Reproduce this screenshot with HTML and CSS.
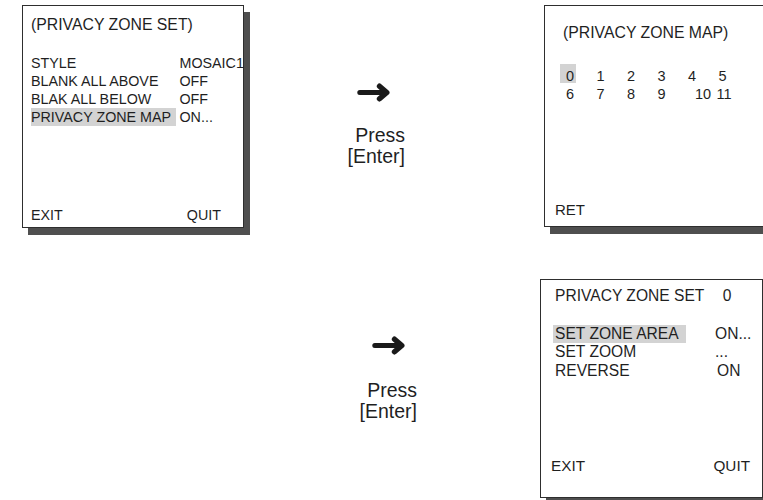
FILE: index.html
```html
<!DOCTYPE html>
<html lang="en">
<head>
<meta charset="utf-8">
<title>Privacy Zone Set</title>
<link rel="stylesheet" href="styles.css">
</head>
<body>
<div class="row row-top">
  <div class="box box-set">
    <div class="title t1">(PRIVACY ZONE SET)</div>
    <div class="menu menu1">
      <div class="lbl">STYLE</div><div class="val val-mosaic">MOSAIC1</div>
      <div class="lbl">BLANK ALL ABOVE</div><div class="val">OFF</div>
      <div class="lbl">BLAK ALL BELOW</div><div class="val">OFF</div>
      <div class="lbl hl">PRIVACY ZONE MAP</div><div class="val val-on">ON...</div>
    </div>
    <div class="foot foot1"><span>EXIT</span><span>QUIT</span></div>
  </div>
  <div class="step step1">
    <svg class="arrow" width="33" height="19" viewBox="0 0 33 19"><line x1="2.8" y1="9.5" x2="26" y2="9.5" stroke="#1a1a1a" stroke-width="5" stroke-linecap="round"/><polyline points="22.5,3.2 29.8,9.5 22.5,15.8" fill="none" stroke="#1a1a1a" stroke-width="5.4" stroke-linecap="round" stroke-linejoin="round"/></svg>
    <div class="press">Press<br>[Enter]</div>
  </div>
  <div class="box box-map">
    <div class="title t2">(PRIVACY ZONE MAP)</div>
    <div class="nums">
      <span class="sel">0</span><span>1</span><span>2</span><span>3</span><span>4</span><span>5</span>
      <span>6</span><span>7</span><span>8</span><span>9</span><span class="n10">10</span><span class="n11">11</span>
    </div>
    <div class="foot foot2"><span>RET</span></div>
  </div>
</div>
<div class="row row-bottom">
  <div class="step step2">
    <svg class="arrow" width="33" height="19" viewBox="0 0 33 19"><line x1="2.8" y1="9.5" x2="26" y2="9.5" stroke="#1a1a1a" stroke-width="5" stroke-linecap="round"/><polyline points="22.5,3.2 29.8,9.5 22.5,15.8" fill="none" stroke="#1a1a1a" stroke-width="5.4" stroke-linecap="round" stroke-linejoin="round"/></svg>
    <div class="press">Press<br>[Enter]</div>
  </div>
  <div class="box box-zone">
    <div class="title t3">PRIVACY ZONE SET<span class="zone-no">0</span></div>
    <div class="menu menu3">
      <div class="lbl hl">SET ZONE AREA</div><div class="val">ON...</div>
      <div class="lbl">SET ZOOM</div><div class="val">...</div>
      <div class="lbl">REVERSE</div><div class="val val-rev">ON</div>
    </div>
    <div class="foot foot3"><span>EXIT</span><span>QUIT</span></div>
  </div>
</div>
</body>
</html>
```

FILE: styles.css
```css
html, body {
  margin: 0;
  padding: 0;
  background: #ffffff;
}
body {
  width: 763px;
  height: 500px;
  overflow: hidden;
  font-family: "Liberation Sans", Arial, sans-serif;
  color: #1f1f1f;
}
.row {
  display: flex;
  align-items: flex-start;
}
.row-top {
  height: 279px;
}
.row-bottom {
  height: 221px;
}
.box {
  box-sizing: border-box;
  background: #ffffff;
  border: 1px solid #2e2e2e;
  box-shadow: 6px 7px 0 #4f4f4f;
  display: flex;
  flex-direction: column;
  flex: none;
  white-space: nowrap;
}
.box-set {
  margin: 5px 0 0 22px;
  width: 222px;
  height: 223px;
}
.box-map {
  margin: 5px 0 0 139px;
  width: 240px;
  height: 222px;
}
.box-zone {
  margin: 0 0 0 123px;
  width: 223px;
  height: 219px;
}
.title {
  font-size: 15.8px;
  line-height: 18px;
}
.t1 {
  padding: 10px 0 0 8px;
}
.t2 {
  padding: 18px 0 0 18px;
}
.t3 {
  font-size: 15.6px;
  line-height: 18.5px;
  padding: 6.5px 0 0 14px;
}
.zone-no {
  margin-left: 18.5px;
}
.menu {
  display: grid;
}
.menu1 {
  margin: 20px 0 0 8px;
  grid-template-columns: 145px auto;
  font-size: 14.3px;
  line-height: 18px;
}
.menu1 .val {
  padding-left: 3.5px;
}
.menu3 {
  margin: 19.5px 0 0 12px;
  grid-template-columns: 133px auto;
  font-size: 15.6px;
  line-height: 18.5px;
}
.menu3 .lbl {
  padding-left: 2px;
}
.menu3 .val {
  padding-left: 29px;
}
.menu3 .val-rev {
  padding-left: 31px;
}
.hl {
  background: #d3d3d3;
}
.nums {
  margin: 26.4px 0 0 21px;
  display: grid;
  grid-template-columns: repeat(6, 30.5px);
  font-size: 14.5px;
  line-height: 17.5px;
}
.sel {
  position: relative;
}
.box-map {
  isolation: isolate;
}
.sel::before {
  content: "";
  position: absolute;
  left: -6px;
  width: 16px;
  top: -4.6px;
  height: 19px;
  background: #d3d3d3;
  z-index: -1;
}
.n10 {
  padding-left: 7px;
}
.n11 {
  margin-left: -2px;
}
.foot {
  margin-top: auto;
  display: flex;
  justify-content: space-between;
}
.foot1 {
  font-size: 14.3px;
  line-height: 18px;
  padding: 0 22px 3.5px 8px;
}
.foot2 {
  font-size: 15px;
  line-height: 18px;
  padding: 0 0 7.5px 10px;
}
.foot3 {
  font-size: 15.3px;
  line-height: 18.5px;
  padding: 0 12px 22px 10px;
}
.step {
  flex: none;
  display: flex;
  flex-direction: column;
  align-items: flex-end;
  text-align: right;
}
.step1 {
  width: 161px;
  padding-top: 83px;
}
.step1 .arrow {
  margin-right: 15px;
}
.step1 .press {
  margin-top: 23px;
}
.step2 {
  width: 417px;
  padding-top: 57px;
}
.step2 .arrow {
  margin-right: 12px;
}
.step2 .press {
  margin-top: 25px;
}
.arrow {
  display: block;
}
.press {
  font-size: 19.5px;
  line-height: 21px;
  color: #1f1f1f;
}
```
